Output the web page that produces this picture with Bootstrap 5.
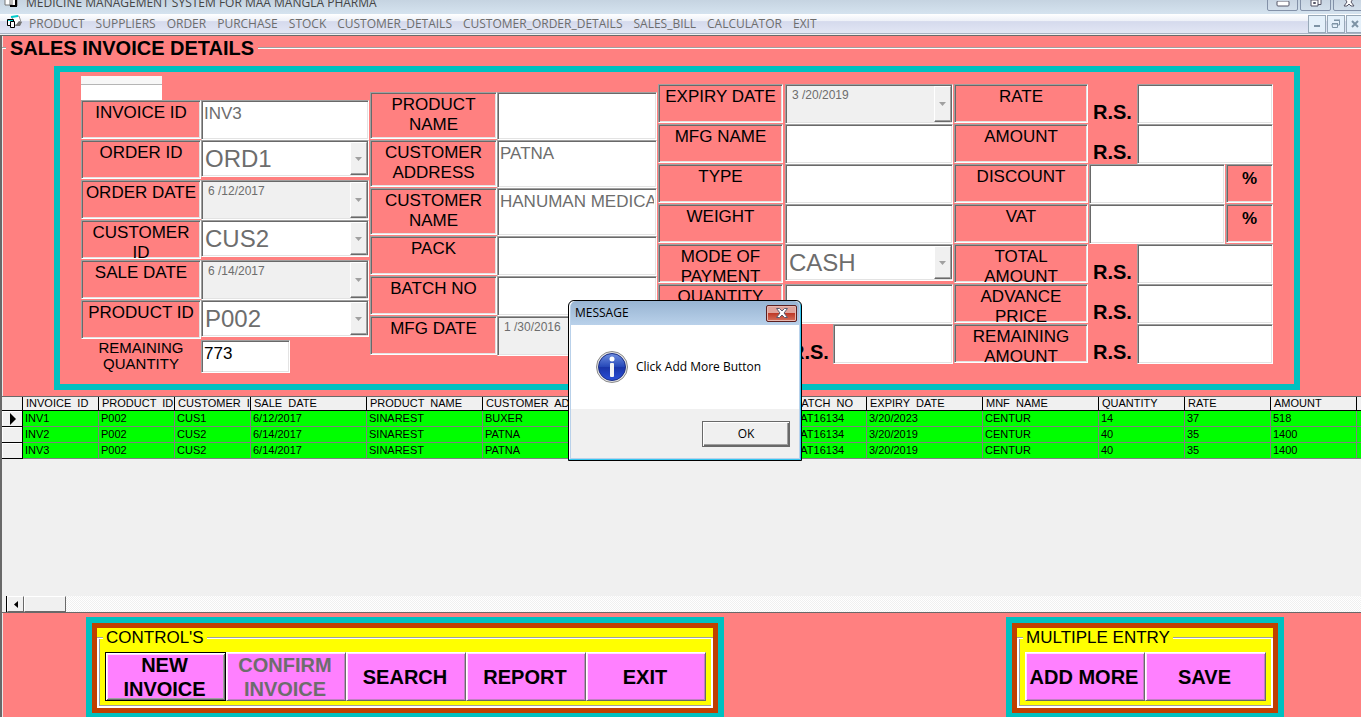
<!DOCTYPE html>
<html lang="en">
<head>
<meta charset="utf-8">
<meta name="viewport" content="width=device-width, initial-scale=1">
<title>Medicine Management System</title>
<link href="https://cdn.jsdelivr.net/npm/bootstrap@5.3.0/dist/css/bootstrap.min.css" rel="stylesheet">
<style>
  :root { --salmon: #ff8080; --teal: #00c0c0; --grayed: #6d6d6d; --face: #f0f0f0; }
  body { font-family: "Liberation Sans", Arial, sans-serif; background: var(--salmon); color: #000; }
  .app-window { height: 100vh; overflow: hidden; }
  .ui-font { font-family: "Open Sans", "Noto Sans", sans-serif; }

  /* Window chrome */
  .title-strip { height: 20px; margin-top: -6px; background: linear-gradient(#bfcddb, #d5e3ef); padding-left: 4px; font-size: 12px; line-height: 18px; color: #444; }
  .title-strip svg, .menu-strip svg { flex: none; }
  .win-group { gap: 2px; margin-right: -3px; }
  .win-btn { width: 31px; height: 17px; padding: 0; border: 1px solid #8391a8; border-radius: 0 0 2px 2px; background: linear-gradient(#c3d0de, #d3dfeb); display: flex; align-items: end; justify-content: center; }
  .menu-strip { height: 19px; background: linear-gradient(#fff 0, #eef1f8 35%, #d5daed 40%, #e2e6f4 100%); padding-left: 6px; font-size: 12px; line-height: 19px; }
  .menu-strip nav { gap: 11px; margin-left: 7px; }
  .menu-strip a { color: var(--grayed); text-decoration: none; white-space: nowrap; }
  .mdi-group { gap: 1px; margin-right: -3px; }
  .mdi-btn { width: 18px; height: 18px; padding: 0; border: 1px solid #98a9b8; background: #e4f0fa; display: flex; align-items: center; justify-content: center; }
  .mdi-edge { height: 3px; flex: none; background: linear-gradient(#a9b3c4 0 1px, #f0f0f0 1px 2px, #696969 2px); }

  /* Invoice group */
  .mdi-form { border-left: 2px solid #696969; background: var(--salmon); min-height: 0; }
  .group-edge { box-shadow: inset 1px 0 #e8e8e8; }
  .group-head { height: 24px; margin-bottom: 6px; }
  .group-head h1 { font-size: 20px; font-weight: 700; line-height: 24px; padding: 0 4px; margin: 0; }
  .etched { border-top: 1px solid #a0a0a0; border-bottom: 1px solid #fff; height: 2px; }
  .etch-stub { width: 4px; flex: none; }
  .invoice-panel { border: 6px solid var(--teal); margin: 0 61px 6px 52px; padding: 4px 20px 11px 21px; display: grid; grid-template-columns: 289fr 288fr 296fr 320fr; }
  .col-low { padding-top: 16px; }
  .col-high { padding-top: 8px; }
  .entry { display: grid; height: 40px; grid-template-rows: 100%; }
  .entry-tall { height: 48px; }
  .entry-short { height: 33px; }
  .grp-a .entry { grid-template-columns: 120fr 168fr; padding-right: 1px; }
  .grp-b .entry { grid-template-columns: 127fr 160fr; padding-right: 1px; }
  .grp-c .entry { grid-template-columns: 125fr 168fr; column-gap: 2px; padding-right: 1px; }
  .grp-d .entry { grid-template-columns: 134fr 49fr 136fr; padding-right: 1px; }
  .grp-d .entry-pct { grid-template-columns: 134fr 136fr 47fr; column-gap: 1px; }
  .grp-c .entry-rs { grid-template-columns: 125fr 46fr 120fr; }
  .grp-a .entry-short { grid-template-columns: 120fr 89fr 79fr; }
  .sunken { border: 1px solid; border-color: #a0a0a0 #fff #fff #a0a0a0; box-shadow: inset 1px 1px #696969, inset -1px -1px #e3e3e3; }
  .cap { font-size: 17px; line-height: 20px; text-align: center; padding-top: 2px; margin-bottom: 1px; min-width: 0; min-height: 0; white-space: nowrap; }
  .cap-plain { font-size: 15px; line-height: 16px; text-align: center; }
  .field { background: #fff; border-radius: 0; font-size: 17px; line-height: 20px; padding: 2px 2px 14px 2px; width: 100%; min-width: 0; color: #000; }
  .field:disabled { color: var(--grayed); }
  .entry-tall .field { padding-bottom: 22px; }
  .entry-short .field { padding-bottom: 8px; }
  .picker { display: flex; min-width: 0; padding: 1px; background: #fff; }
  .picker-combo { height: 37px; }
  .picker-date { background: var(--face); }
  .picker > select, .picker > input { appearance: none; border: 0; background: none; flex: 1 1 0; min-width: 0; padding: 0 0 0 2px; color: var(--grayed); opacity: 1; font-size: 24px; line-height: 32px; }
  .picker > input { font-size: 12px; line-height: 16px; padding: 0 0 18px 5px; }
  .drop { width: 17px; flex: none; background: var(--face); border: 1px solid; border-color: #fff #a0a0a0 #696969 #fff; box-shadow: 1px 0 #696969, inset 0 -1px #a0a0a0; display: flex; align-items: center; justify-content: center; }
  .rs { font-size: 20px; font-weight: 700; line-height: 24px; padding: 16px 0 0 5px; }
  .pct { font-size: 17px; font-weight: 700; line-height: 24px; }
  .calendar-stub { width: 81px; height: 24px; background: linear-gradient(#f7f7f7 0 8px, #b5b5b5 8px 9px, #fff 9px); }

  /* Records grid */
  .records { background: var(--face); flex: 1 1 auto; min-height: 0; overflow: hidden; border-top: 1px solid #696969; border-bottom: 1px solid #696969; }
  .records-table { table-layout: fixed; width: 1400px; border-collapse: separate; border-spacing: 0; font-size: 11px; line-height: 13px; }
  .records-table th, .records-table td { padding: 0 0 0 2px; white-space: pre; overflow: hidden; }
  .records-table thead th { height: 14px; font-weight: 400; border-right: 1px solid #000; border-bottom: 1px solid #000; background: var(--face); padding-left: 3px; }
  .records-table tbody td { height: 16px; line-height: 15px; background: #0f0; border-right: 1px solid #808080; border-bottom: 1px solid #808080; vertical-align: top; }
  .records-table tbody th { height: 16px; background: var(--face); border-right: 1px solid #000; border-bottom: 1px solid #000; box-shadow: inset 1px 1px #fff; text-align: center; }
  .records-table tbody th svg { display: block; margin: 0 auto; }
  .c-mark { width: 21px; } .c-s { width: 76px; } .c-m { width: 86px; } .c-l { width: 116px; }
  .scroll-row { height: 16px; background: repeating-conic-gradient(#fff 0 25%, var(--face) 0 50%) 0 0 / 2px 2px; }
  .scroll-split { width: 5px; background: var(--face); border-right: 1px solid #000; }
  .scroll-btn { width: 17px; padding: 0; display: flex; align-items: center; justify-content: center; }
  .scroll-thumb { width: 42px; }
  .raised { background: var(--face); border: 1px solid; border-color: #fff #696969 #696969 #fff; }

  /* Command groups */
  .commands { padding: 4px 77px 0 84px; flex: none; }
  .cmd-outer { border: 6px solid var(--teal); border-bottom-width: 4px; }
  .cmd-mid { border: 5px solid #c04000; background: #ff0; }
  .cmd-head { font-size: 17px; line-height: 20px; }
  .cmd-head span { padding: 0 3px; }
  .cmd-head .etch-stub { width: 6px; }
  .cmd-body { border: solid #fff; border-width: 0 2px 2px 2px; margin-top: -9px; padding: 13px 5px 5px 6px; box-shadow: inset 1px 0 #a0a0a0, inset 0 -1px #a0a0a0; }
  .cmd { width: 120px; height: 49px; padding: 0 2px 0 0; background: #ff80ff; font-size: 20px; font-weight: 700; line-height: 24px; border: 1px solid; border-color: #fff #696969 #696969 #fff; box-shadow: inset 1px 1px #ffe0ff, inset -1px -1px #c080c0; color: #000; white-space: nowrap; }
  .cmd:disabled { color: var(--grayed); }
  .cmd-default { width: 121px; border-color: #000; box-shadow: inset 1px 1px #fff, inset -1px -1px #696969, inset 2px 2px #ffe0ff, inset -2px -2px #a0a0a0; }
  .cmd-wide { width: 121px; }

  /* Message box */
  .msg { left: 568px; top: 300px; width: 234px; height: 161px; background: #b9d1ea; border: 1px solid #000; border-radius: 6px 6px 0 0; box-shadow: inset -1px -1px #35c6f0, inset 1px 1px #fff; padding: 0 2px 2px 2px; font-size: 12px; }
  .msg-title { height: 24px; padding: 0 2px 0 4px; background: linear-gradient(#98b4d2, #b9d1ea); border-radius: 5px 5px 0 0; }
  .msg-close { width: 31px; height: 17px; padding: 0; border: 1px solid #5c1f1f; border-radius: 2px; background: linear-gradient(#e0a39b 0 45%, #bf3a28 50%, #d5705c 100%); box-shadow: inset 0 0 0 1px #e8b8b0; display: flex; align-items: center; justify-content: center; }
  .msg-body { background: #fff; height: 84px; padding: 0 0 0 25px; }
  .msg-foot { background: var(--face); padding-right: 9px; }
  .msg-ok { width: 88px; height: 26px; padding: 0; font-size: 12px; background: var(--face); border: 1px solid #696969; box-shadow: inset 1px 1px #fff, inset -1px -1px #696969, inset -2px -2px #a0a0a0; color: #000; }
</style>
</head>
<body>
<div class="app-window d-flex flex-column position-relative">

  <header class="ui-font flex-shrink-0">
    <div class="title-strip d-flex">
      <svg width="14" height="14" viewBox="0 0 14 14" class="me-2" aria-hidden="true"><path d="M1 2h7v9H1zM6 4h7v8H6z" fill="#fff" stroke="#777"/><path d="M12 5v8M6 12h6" stroke="#000" stroke-width="2"/></svg>
      <span class="me-auto text-nowrap">MEDICINE MANAGEMENT SYSTEM FOR MAA MANGLA PHARMA</span>
      <div class="win-group d-flex">
        <button class="win-btn" aria-label="Minimize"><svg width="14" height="9" viewBox="0 0 14 9"><rect x="1" y="0" width="12" height="5" rx="1" fill="#fff" stroke="#556"/></svg></button>
        <button class="win-btn" aria-label="Restore"><svg width="14" height="14" viewBox="0 0 14 14"><path d="M5 1.500h7v7H9" fill="#fff" stroke="#556"/><path d="M2 4h7v6H2z" fill="#fff" stroke="#556"/><path d="M4.500 6.500h2v1h-2z" fill="none" stroke="#556"/></svg></button>
        <button class="win-btn" aria-label="Close"><svg width="14" height="14" viewBox="0 0 14 14"><path d="M2 1h3l2 2.500L9 1h3L9 6l3 4H9L7 8l-2 2H2l3-4z" fill="#fff" stroke="#556"/></svg></button>
      </div>
    </div>
    <div class="menu-strip d-flex">
      <svg width="16" height="16" viewBox="0 0 16 16" aria-hidden="true"><path d="M6 3l7-1 2 6-1 3H8z" fill="#fff" stroke="#999"/><path d="M5 3l7-1" stroke="#0cc" stroke-width="2"/><path d="M13 7l3 1-2 4H9z" fill="#777"/><path d="M1.500 5.500h6v6h-6z" fill="#fff" stroke="#000"/><path d="M2 6.500h5" stroke="#0cc"/><path d="M4.500 7.500h4v6h-4z" fill="#fff" stroke="#000"/></svg>
      <nav class="d-flex me-auto">
        <a href="#">PRODUCT</a><a href="#">SUPPLIERS</a><a href="#">ORDER</a><a href="#">PURCHASE</a><a href="#">STOCK</a><a href="#">CUSTOMER_DETAILS</a><a href="#">CUSTOMER_ORDER_DETAILS</a><a href="#">SALES_BILL</a><a href="#">CALCULATOR</a><a href="#">EXIT</a>
      </nav>
      <div class="mdi-group d-flex align-items-end">
        <button class="mdi-btn" aria-label="Minimize form"><svg width="8" height="8"><path d="M1 6h6" stroke="#7d93a5" stroke-width="2"/></svg></button>
        <button class="mdi-btn" aria-label="Restore form"><svg width="10" height="10" fill="none" stroke="#7d93a5"><path d="M3 1.500h5.500V6H7M1 5h5.500v3.500h-5z"/><path d="M3 1h6M1 4.500h6"/></svg></button>
        <button class="mdi-btn" aria-label="Close form"><svg width="8" height="8"><path d="M1 1l6 6M7 1L1 7" stroke="#7d93a5" stroke-width="2"/></svg></button>
      </div>
    </div>
  </header>
  <div class="mdi-edge"></div>

  <main class="mdi-form d-flex flex-column flex-grow-1">
    <section class="group-edge flex-shrink-0">
      <div class="group-head d-flex align-items-center">
        <span class="etched etch-stub"></span><h1>SALES INVOICE DETAILS</h1><span class="etched flex-grow-1"></span>
      </div>

      <form class="invoice-panel">
        <div class="grp-a">
          <div class="calendar-stub"></div>
          <div class="entry"><label class="cap sunken" for="inv">INVOICE ID</label><input id="inv" class="field sunken" value="INV3" disabled></div>
          <div class="entry"><label class="cap sunken" for="ord">ORDER ID</label><div class="picker picker-combo sunken"><select id="ord" disabled><option>ORD1</option></select><span class="drop"><svg width="7" height="4"><path d="M0 0h7L3.500 4z" fill="#a0a0a0"/></svg></span></div></div>
          <div class="entry"><label class="cap sunken" for="odate">ORDER DATE</label><div class="picker picker-date sunken"><input id="odate" value="6 /12/2017" disabled><span class="drop"><svg width="7" height="4"><path d="M0 0h7L3.500 4z" fill="#a0a0a0"/></svg></span></div></div>
          <div class="entry"><label class="cap sunken" for="cus">CUSTOMER<br>ID</label><div class="picker picker-combo sunken"><select id="cus" disabled><option>CUS2</option></select><span class="drop"><svg width="7" height="4"><path d="M0 0h7L3.500 4z" fill="#a0a0a0"/></svg></span></div></div>
          <div class="entry"><label class="cap sunken" for="sdate">SALE DATE</label><div class="picker picker-date sunken"><input id="sdate" value="6 /14/2017" disabled><span class="drop"><svg width="7" height="4"><path d="M0 0h7L3.500 4z" fill="#a0a0a0"/></svg></span></div></div>
          <div class="entry"><label class="cap sunken" for="prod">PRODUCT ID</label><div class="picker picker-combo sunken"><select id="prod" disabled><option>P002</option></select><span class="drop"><svg width="7" height="4"><path d="M0 0h7L3.500 4z" fill="#a0a0a0"/></svg></span></div></div>
          <div class="entry entry-short"><label class="cap-plain" for="rem">REMAINING<br>QUANTITY</label><input id="rem" class="field sunken" value="773"></div>
        </div>

        <div class="grp-b col-low">
          <div class="entry entry-tall"><label class="cap sunken" for="pname">PRODUCT<br>NAME</label><input id="pname" class="field sunken"></div>
          <div class="entry entry-tall"><label class="cap sunken" for="cadd">CUSTOMER<br>ADDRESS</label><input id="cadd" class="field sunken" value="PATNA" disabled></div>
          <div class="entry entry-tall"><label class="cap sunken" for="cname">CUSTOMER<br>NAME</label><input id="cname" class="field sunken" value="HANUMAN MEDICAL" disabled></div>
          <div class="entry"><label class="cap sunken" for="pack">PACK</label><input id="pack" class="field sunken"></div>
          <div class="entry"><label class="cap sunken" for="batch">BATCH NO</label><input id="batch" class="field sunken"></div>
          <div class="entry"><label class="cap sunken" for="mdate">MFG DATE</label><div class="picker picker-date sunken"><input id="mdate" value="1 /30/2016" disabled><span class="drop"></span></div></div>
        </div>

        <div class="grp-c col-high">
          <div class="entry"><label class="cap sunken" for="edate">EXPIRY DATE</label><div class="picker picker-date sunken"><input id="edate" value="3 /20/2019" disabled><span class="drop"><svg width="7" height="4"><path d="M0 0h7L3.500 4z" fill="#a0a0a0"/></svg></span></div></div>
          <div class="entry"><label class="cap sunken" for="mname">MFG NAME</label><input id="mname" class="field sunken"></div>
          <div class="entry"><label class="cap sunken" for="type">TYPE</label><input id="type" class="field sunken"></div>
          <div class="entry"><label class="cap sunken" for="weight">WEIGHT</label><input id="weight" class="field sunken"></div>
          <div class="entry"><label class="cap sunken" for="mode">MODE OF<br>PAYMENT</label><div class="picker picker-combo sunken"><select id="mode" disabled><option>CASH</option></select><span class="drop"><svg width="7" height="4"><path d="M0 0h7L3.500 4z" fill="#a0a0a0"/></svg></span></div></div>
          <div class="entry"><label class="cap sunken" for="qty">QUANTITY</label><input id="qty" class="field sunken"></div>
          <div class="entry entry-rs"><span></span><span class="rs">R.S.</span><input class="field sunken" aria-label="Price"></div>
        </div>

        <div class="grp-d col-high">
          <div class="entry"><label class="cap sunken" for="rate">RATE</label><span class="rs">R.S.</span><input id="rate" class="field sunken"></div>
          <div class="entry"><label class="cap sunken" for="amount">AMOUNT</label><span class="rs">R.S.</span><input id="amount" class="field sunken"></div>
          <div class="entry entry-pct"><label class="cap sunken" for="disc">DISCOUNT</label><input id="disc" class="field sunken"><span class="cap pct sunken">%</span></div>
          <div class="entry entry-pct"><label class="cap sunken" for="vat">VAT</label><input id="vat" class="field sunken"><span class="cap pct sunken">%</span></div>
          <div class="entry"><label class="cap sunken" for="total">TOTAL<br>AMOUNT</label><span class="rs">R.S.</span><input id="total" class="field sunken"></div>
          <div class="entry"><label class="cap sunken" for="adv">ADVANCE<br>PRICE</label><span class="rs">R.S.</span><input id="adv" class="field sunken"></div>
          <div class="entry"><label class="cap sunken" for="ramt">REMAINING<br>AMOUNT</label><span class="rs">R.S.</span><input id="ramt" class="field sunken"></div>
        </div>
      </form>
    </section>

    <section class="records d-flex flex-column">
      <div class="flex-grow-1 overflow-hidden">
        <table class="records-table">
          <colgroup><col class="c-mark"><col class="c-s"><col class="c-s"><col class="c-s"><col class="c-l"><col class="c-l"><col class="c-l"><col class="c-l"><col class="c-s"><col class="c-s"><col class="c-l"><col class="c-l"><col class="c-m"><col class="c-m"><col class="c-m"><col></colgroup>
          <thead><tr><th></th><th>INVOICE  ID</th><th>PRODUCT  ID</th><th>CUSTOMER  ID</th><th>SALE  DATE</th><th>PRODUCT  NAME</th><th>CUSTOMER  ADDRESS</th><th>CUSTOMER  NAME</th><th>PACK</th><th>BATCH  NO</th><th>EXPIRY  DATE</th><th>MNF  NAME</th><th>QUANTITY</th><th>RATE</th><th>AMOUNT</th><th></th></tr></thead>
          <tbody>
            <tr><th><svg width="6" height="12"><path d="M0 0l6 6-6 6z"/></svg></th><td>INV1</td><td>P002</td><td>CUS1</td><td>6/12/2017</td><td>SINAREST</td><td>BUXER</td><td></td><td></td><td>BAT16134</td><td>3/20/2023</td><td>CENTUR</td><td>14</td><td>37</td><td>518</td><td></td></tr>
            <tr><th></th><td>INV2</td><td>P002</td><td>CUS2</td><td>6/14/2017</td><td>SINAREST</td><td>PATNA</td><td></td><td></td><td>BAT16134</td><td>3/20/2019</td><td>CENTUR</td><td>40</td><td>35</td><td>1400</td><td></td></tr>
            <tr><th></th><td>INV3</td><td>P002</td><td>CUS2</td><td>6/14/2017</td><td>SINAREST</td><td>PATNA</td><td></td><td></td><td>BAT16134</td><td>3/20/2019</td><td>CENTUR</td><td>40</td><td>35</td><td>1400</td><td></td></tr>
          </tbody>
        </table>
      </div>
      <div class="scroll-row d-flex flex-shrink-0">
        <span class="scroll-split"></span><button class="scroll-btn raised" aria-label="Scroll left"><svg width="4" height="7"><path d="M4 0v7L0 3.500z"/></svg></button><span class="scroll-thumb raised"></span>
      </div>
    </section>

    <section class="commands group-edge d-flex justify-content-between">
      <div class="cmd-outer"><div class="cmd-mid">
        <div class="cmd-head d-flex align-items-center"><i class="etched etch-stub"></i><span>CONTROL'S</span><i class="etched flex-grow-1"></i></div>
        <div class="cmd-body d-flex">
          <button class="cmd cmd-default">NEW<br>INVOICE</button><button class="cmd" disabled>CONFIRM<br>INVOICE</button><button class="cmd">SEARCH</button><button class="cmd">REPORT</button><button class="cmd">EXIT</button>
        </div>
      </div></div>
      <div class="cmd-outer"><div class="cmd-mid">
        <div class="cmd-head d-flex align-items-center"><i class="etched etch-stub"></i><span>MULTIPLE ENTRY</span><i class="etched flex-grow-1"></i></div>
        <div class="cmd-body d-flex">
          <button class="cmd">ADD MORE</button><button class="cmd cmd-wide">SAVE</button>
        </div>
      </div></div>
    </section>
  </main>

  <div class="msg ui-font position-absolute d-flex flex-column" role="dialog" aria-labelledby="msgTitle">
    <div class="msg-title d-flex align-items-center justify-content-between">
      <span id="msgTitle">MESSAGE</span>
      <button class="msg-close" aria-label="Close"><svg width="12" height="10" viewBox="0 0 12 10"><path d="M.5.500h3L6 3 8.500.500h3L8 5l3.500 4.500h-3L6 7 3.500 9.500h-3L4 5z" fill="#fff" stroke="#5a5a6e"/></svg></button>
    </div>
    <div class="msg-body d-flex align-items-center">
      <svg width="32" height="32" viewBox="0 0 32 32" class="me-2" aria-hidden="true">
        <defs><linearGradient id="ig" x1="0" y1="0" x2="0" y2="1"><stop offset="0" stop-color="#6f8fe0"/><stop offset=".5" stop-color="#2547b8"/><stop offset=".52" stop-color="#1a35a8"/><stop offset="1" stop-color="#2a50d8"/></linearGradient></defs>
        <circle cx="16" cy="16" r="15.500" fill="#e4e4e4" stroke="#8a8a8a"/><circle cx="16" cy="16" r="13.500" fill="url(#ig)" stroke="#1c2f86"/>
        <circle cx="16" cy="8" r="2.500" fill="#fff"/><rect x="14" y="12" width="4" height="14" rx="1" fill="#f4f4f4"/>
      </svg>
      <span>Click Add More Button</span>
    </div>
    <div class="msg-foot flex-grow-1 d-flex align-items-center justify-content-end"><button class="msg-ok">OK</button></div>
  </div>
</div>
<script src="https://cdn.jsdelivr.net/npm/bootstrap@5.3.0/dist/js/bootstrap.bundle.min.js"></script>
</body>
</html>
